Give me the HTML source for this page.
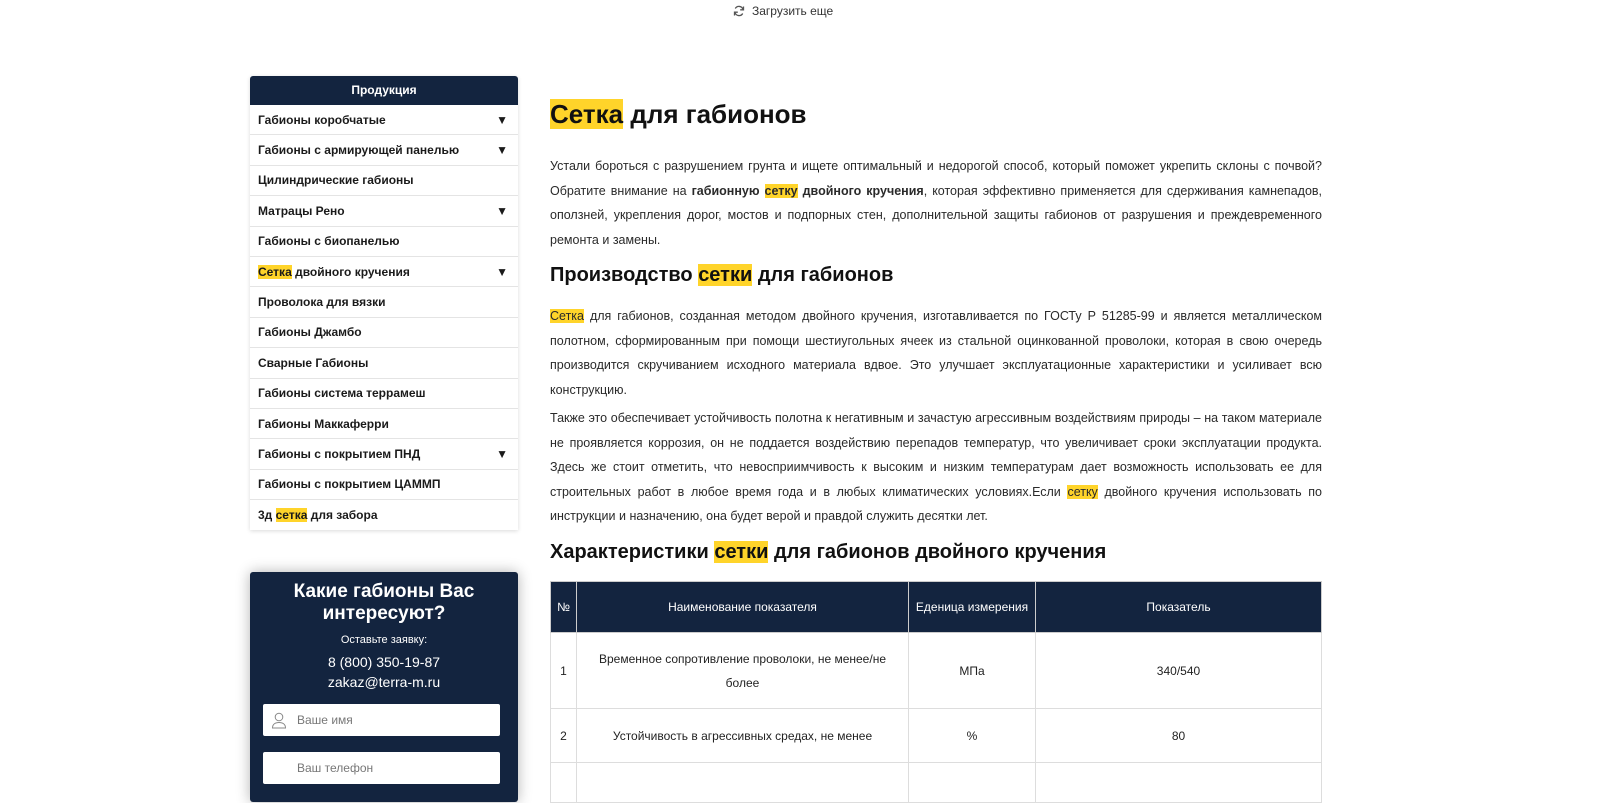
<!DOCTYPE html>
<html><head><meta charset="utf-8"><style>
*{box-sizing:border-box;margin:0;padding:0}
body{width:1600px;height:784px;overflow:hidden;background:#fff;font-family:"Liberation Sans",Arial,sans-serif;color:#222;position:relative}
.hl{background:#ffd42a}
.load{position:absolute;top:4px;left:733px;font-size:12px;color:#333;display:flex;align-items:center;gap:7px}
.side{position:absolute;left:250px;top:76px;width:268px;box-shadow:0 1px 4px rgba(0,0,0,.15);border-radius:3px 3px 0 0}
.side .hd{background:#13243f;color:#fff;font-weight:bold;font-size:12px;text-align:center;height:29px;line-height:29px;border-radius:3px 3px 0 0}
.side .it{height:30.4px;border-bottom:1px solid #e4e4e4;font-size:12px;font-weight:bold;color:#1a1a1a;padding-left:8px;display:flex;align-items:center;justify-content:space-between;padding-right:10px}
.side .it:last-child{border-bottom:none}
.form{position:absolute;left:250px;top:572px;width:268px;height:230px;background:#13243f;border-radius:3px;box-shadow:0 0 14px rgba(0,0,0,.3);color:#fff;text-align:center}
.form h3{font-size:19px;line-height:22px;margin-top:9px}
.form .s{font-size:11px;margin-top:9px}
.form .p{font-size:14px;margin-top:6px;line-height:20px}
.inp{position:relative;margin:8px 0 0 13px;width:237px;height:32px;background:#fff;border-radius:2px;text-align:left;color:#777;font-size:12px;line-height:32px;padding-left:34px}
.main{position:absolute;left:550px;top:0;width:772px}
h1{position:absolute;top:99px;font-size:26px;font-weight:bold;color:#111}
h2{font-size:20px;font-weight:bold;color:#111;position:absolute}
p{position:absolute;font-size:12.5px;line-height:24.5px;text-align:justify;width:772px;color:#2a2a2a}
table{position:absolute;top:581px;left:0;width:772px;border-collapse:collapse;font-size:12px;text-align:center}
th{background:#13243f;color:#fff;font-weight:normal;height:51px;border:1px solid #ccc}
td{border:1px solid #ddd;line-height:24px;color:#222}
</style></head><body>
<div class="load"><svg width="12" height="12" viewBox="0 0 12 12"><path d="M10 4.5A4.2 4.2 0 0 0 2.3 3.5M2 7.5a4.2 4.2 0 0 0 7.7 1" fill="none" stroke="#555" stroke-width="1.3"/><path d="M10.5 1.5v3.3H7.2M1.5 10.5V7.2h3.3" fill="none" stroke="#555" stroke-width="1.3"/></svg>Загрузить еще</div>
<div class="side">
<div class="hd">Продукция</div>
<div class="it">Габионы коробчатые<span>▼</span></div>
<div class="it">Габионы с армирующей панелью<span>▼</span></div>
<div class="it">Цилиндрические габионы</div>
<div class="it">Матрацы Рено<span>▼</span></div>
<div class="it">Габионы с биопанелью</div>
<div class="it"><span><span class="hl">Сетка</span> двойного кручения</span><span>▼</span></div>
<div class="it">Проволока для вязки</div>
<div class="it">Габионы Джамбо</div>
<div class="it">Сварные Габионы</div>
<div class="it">Габионы система террамеш</div>
<div class="it">Габионы Маккаферри</div>
<div class="it">Габионы с покрытием ПНД<span>▼</span></div>
<div class="it">Габионы с покрытием ЦАММП</div>
<div class="it"><span>3д <span class="hl">сетка</span> для забора</span></div>
</div>
<div class="form">
<h3>Какие габионы Вас<br>интересуют?</h3>
<div class="s">Оставьте заявку:</div>
<div class="p">8 (800) 350-19-87<br>zakaz@terra-m.ru</div>
<div class="inp" style="margin-top:12px"><svg style="position:absolute;left:8px;top:8px" width="16" height="17" viewBox="0 0 16 17"><circle cx="8" cy="5" r="3.8" fill="none" stroke="#888"/><path d="M1.5 16c0-4 3-5.5 6.5-5.5s6.5 1.5 6.5 5.5z" fill="none" stroke="#888"/></svg>Ваше имя</div>
<div class="inp" style="margin-top:16px">Ваш телефон</div>
</div>
<div class="main">
<h1><span class="hl">Сетка</span> для габионов</h1>
<p style="top:154px">Устали бороться с разрушением грунта и ищете оптимальный и недорогой способ, который поможет укрепить склоны с почвой? Обратите внимание на <b>габионную <span class="hl">сетку</span> двойного кручения</b>, которая эффективно применяется для сдерживания камнепадов, оползней, укрепления дорог, мостов и подпорных стен, дополнительной защиты габионов от разрушения и преждевременного ремонта и замены.</p>
<h2 style="top:264px">Производство <span class="hl">сетки</span> для габионов</h2>
<p style="top:304px"><span class="hl">Сетка</span> для габионов, созданная методом двойного кручения, изготавливается по ГОСТу Р 51285-99 и является металлическом полотном, сформированным при помощи шестиугольных ячеек из стальной оцинкованной проволоки, которая в свою очередь производится скручиванием исходного материала вдвое. Это улучшает эксплуатационные характеристики и усиливает всю конструкцию.</p>
<p style="top:406px">Также это обеспечивает устойчивость полотна к негативным и зачастую агрессивным воздействиям природы – на таком материале не проявляется коррозия, он не поддается воздействию перепадов температур, что увеличивает сроки эксплуатации продукта. Здесь же стоит отметить, что невосприимчивость к высоким и низким температурам дает возможность использовать ее для строительных работ в любое время года и в любых климатических условиях.Если <span class="hl">сетку</span> двойного кручения использовать по инструкции и назначению, она будет верой и правдой служить десятки лет.</p>
<h2 style="top:541px">Характеристики <span class="hl">сетки</span> для габионов двойного кручения</h2>
<table>
<tr><th style="width:26px">№</th><th style="width:332px">Наименование показателя</th><th style="width:127px">Еденица измерения</th><th>Показатель</th></tr>
<tr style="height:76px"><td>1</td><td style="padding:0 16px">Временное сопротивление проволоки, не менее/не более</td><td>МПа</td><td>340/540</td></tr>
<tr style="height:54px"><td>2</td><td>Устойчивость в агрессивных средах, не менее</td><td>%</td><td>80</td></tr>
<tr style="height:40px"><td></td><td></td><td></td><td></td></tr>
</table>
</div>
</body></html>
